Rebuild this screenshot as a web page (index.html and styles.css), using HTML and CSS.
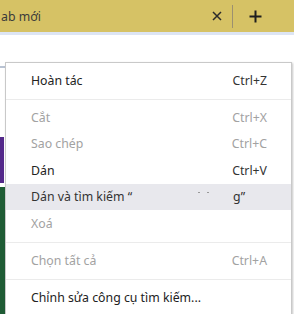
FILE: index.html
```html
<!DOCTYPE html>
<html lang="vi">
<head>
<meta charset="utf-8">
<title>Menu</title>
<link rel="stylesheet" href="styles.css">
</head>
<body>
<div class="tabbar">
  <span class="tab-title">ab mới</span>
  <svg class="tab-close" width="10" height="10" viewBox="0 0 10 10"><path d="M1 1L9 9M9 1L1 9" stroke="#2b2b2b" stroke-width="1.5" fill="none"/></svg>
  <span class="tab-divider"></span>
  <svg class="tab-new" width="13" height="13" viewBox="0 0 13 13"><path d="M6.5 0.5V12.5M0.5 6.5H12.5" stroke="#1e1e1e" stroke-width="2" fill="none"/></svg>
</div>
<div class="toolbar-line"></div>
<div class="page">
  <div class="page-input"></div>
  <div class="page-purple"></div>
  <div class="page-green"></div>
</div>
<div class="menu">
  <div class="item"><span>Hoàn tác</span><span class="key">Ctrl+Z</span></div>
  <div class="sep"></div>
  <div class="item off"><span>Cắt</span><span class="key">Ctrl+X</span></div>
  <div class="item off"><span>Sao chép</span><span class="key">Ctrl+C</span></div>
  <div class="item"><span>Dán</span><span class="key">Ctrl+V</span></div>
  <div class="item hover"><span>Dán và tìm kiếm “<span class="redacted"><i class="speck s1"></i><i class="speck s2"></i></span>g”</span></div>
  <div class="item off"><span>Xoá</span></div>
  <div class="sep sep2"></div>
  <div class="item off"><span>Chọn tất cả</span><span class="key">Ctrl+A</span></div>
  <div class="sep"></div>
  <div class="item"><span>Chỉnh sửa công cụ tìm kiếm...</span></div>
</div>
</body>
</html>
```
FILE: styles.css
```css
html, body {
  margin: 0;
  padding: 0;
  width: 294px;
  height: 314px;
  overflow: hidden;
  background: #ffffff;
  font-family: "Noto Sans", "Open Sans", sans-serif;
}

.tabbar {
  height: 32px;
  background: #d6c265;
  display: flex;
  align-items: center;
  padding-right: 32px;
  box-sizing: border-box;
}

.tab-title {
  flex: 1;
  margin-left: 1px;
  font-size: 12.3px;
  color: #3a3a3a;
  white-space: nowrap;
}

.tab-close {
  display: block;
  margin-right: 10px;
}

.tab-divider {
  width: 1px;
  height: 23px;
  background: #9c9070;
  margin-right: 16px;
}

.tab-new {
  display: block;
}

.toolbar-line {
  height: 3px;
  background: #dde5f4;
}

.page {
  display: flex;
  flex-direction: column;
}

.page-input {
  width: 5px;
  height: 2px;
  margin-top: 31px;
  background: #b9c3d3;
}

.page-purple {
  width: 4px;
  height: 46px;
  margin-top: 69px;
  background: #53288a;
}

.page-green {
  width: 5px;
  height: 130px;
  margin-top: 4px;
  background: #1f5c35;
}

.menu {
  position: absolute;
  top: 62px;
  left: 5px;
  width: 285px;
  height: 249px;
  padding-top: 4px;
  box-sizing: content-box;
  background: #ffffff;
  border: 1px solid #c9c9c9;
  box-shadow: 1px 1px 2px rgba(0, 0, 0, 0.22);
  font-size: 12.3px;
  color: #222222;
}

.item {
  height: 26.5px;
  display: flex;
  align-items: center;
  justify-content: space-between;
  padding: 0 24px 0 25px;
  white-space: nowrap;
}

.item.off {
  color: #a2a2a2;
}

.item.hover {
  background: #e8e8ed;
  color: #333333;
}

.key {
  color: #333333;
}

.off .key {
  color: #a2a2a2;
}

.sep {
  height: 1px;
  background: #ebebeb;
  margin: 5px 0 4.5px;
}

.sep2 {
  margin: 5px 0 5px;
}

.redacted {
  display: inline-block;
  width: 101px;
  height: 10px;
  position: relative;
}

.speck {
  position: absolute;
  top: 1px;
  width: 2px;
  height: 1px;
  background: #9a9a9a;
}

.s1 {
  left: 66px;
}

.s2 {
  left: 75px;
}
```
